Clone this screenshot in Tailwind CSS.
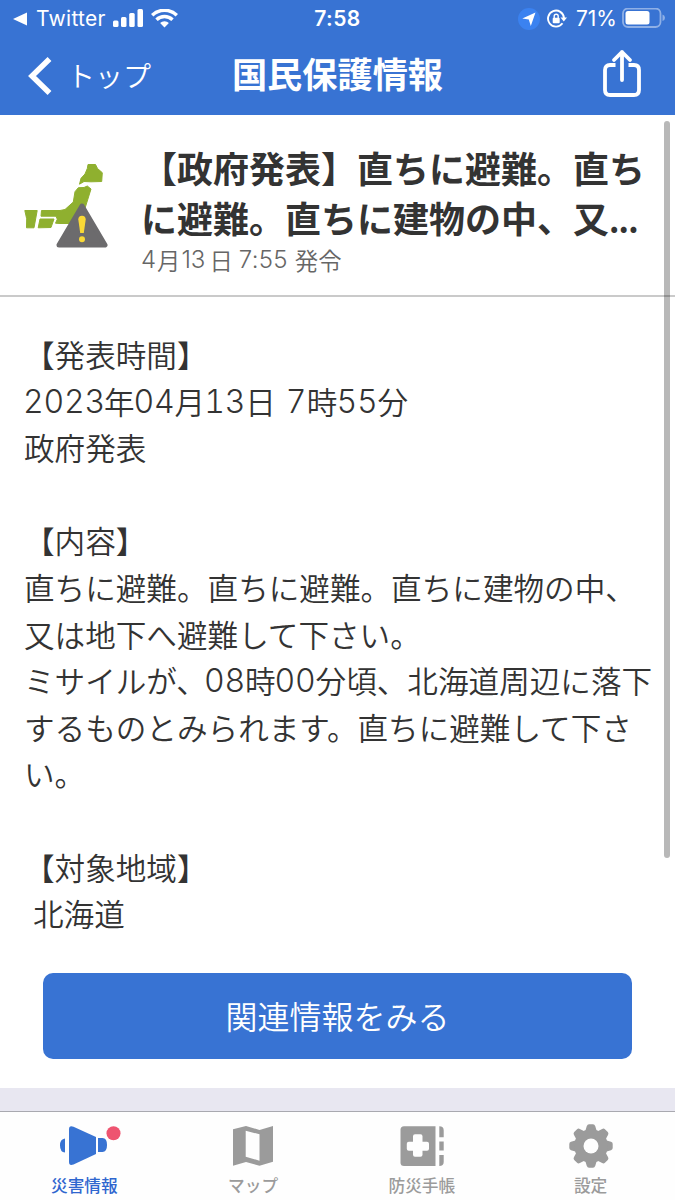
<!DOCTYPE html>
<html lang="ja">
<head>
<meta charset="utf-8">
<title>国民保護情報</title>
<script src="https://cdn.jsdelivr.net/npm/@tailwindcss/browser@4"></script>
</head>
<body class="relative flex h-[1200px] w-[675px] flex-col overflow-hidden bg-white font-['Noto_Sans_CJK_JP',sans-serif] text-[#333]">

<header class="h-[115px] shrink-0 bg-[#3873d3] text-white">
  <div class="grid h-9 grid-cols-3 items-center pt-px font-['Inter',sans-serif] text-[20.5px] leading-none">
    <div class="flex items-center pl-[13px]">
      <svg class="h-[14px] w-[14px]" viewBox="0 0 14 14"><path d="M0 7 14 .5v13z" fill="#fff"/></svg>
      <span class="ml-[9px] w-[69px] text-[21px] tracking-[0.3px]">Twitter</span>
      <svg class="ml-2 h-[20px] w-[30px]" viewBox="0 0 30 20" fill="#fff"><rect x="0" y="11.500" width="5.500" height="6.500" rx="1.500"/><rect x="8" y="8" width="5.500" height="10" rx="1.500"/><rect x="16.200" y="4" width="5.500" height="14" rx="1.500"/><rect x="24.500" y="0" width="5.500" height="18" rx="1.500"/></svg>
      <svg class="ml-2 h-[20px] w-[27px]" viewBox="0 0 27 20"><g fill="none" stroke="#fff" stroke-width="3.400"><path d="M1.200 6.300a17.500 17.500 0 0 1 24.600 0"/><path d="M5.500 10.800a11.400 11.400 0 0 1 16 0"/></g><path d="M13.500 18.500 9.100 14.100a6.300 6.300 0 0 1 8.800 0z" fill="#fff"/></svg>
    </div>
    <div class="text-center text-[21px] font-semibold tracking-[0.4px]">7:58</div>
    <div class="flex items-center justify-end pr-[9px]">
      <svg class="h-[22px] w-[22px]" viewBox="0 0 22 22"><circle cx="11" cy="11" r="11" fill="#3b82f0"/><path d="M17.500 4.500 12.800 18 10.800 11.500 4.300 10.600z" fill="#fff"/></svg>
      <svg class="ml-[7px] h-[20px] w-[20px]" viewBox="0 0 20 20"><path d="M15.500 14.300A8 8 0 1 1 17 9" fill="none" stroke="#fff" stroke-width="1.900"/><path d="M13.500 8.500h6.500l-3.200 4z" fill="#fff"/><rect x="5.700" y="8.700" width="7" height="5.600" rx="1" fill="#fff"/><path d="M7.200 9V7.300a2 2 0 0 1 4 0V9" fill="none" stroke="#fff" stroke-width="1.400"/></svg>
      <span class="ml-[9px] w-[40px] text-[21px] tracking-[-0.1px]">71%</span>
      <svg class="ml-[6px] h-[21px] w-[44px]" viewBox="0 0 44 21"><rect x="1" y="0.500" width="37.500" height="18.500" rx="5" fill="none" stroke="#8fb0e6" stroke-width="1.800"/><rect x="3.500" y="3" width="24" height="13.500" rx="2.500" fill="#fff"/><path d="M40.500 6.500v6.500q2.500-.7 2.500-3.250T40.500 6.500z" fill="#8fb0e6"/></svg>
    </div>
  </div>
  <div class="grid h-[79px] grid-cols-[200px_1fr_200px] items-center">
    <div class="flex items-center pl-[28px]">
      <svg class="h-[40px] w-[24px]" viewBox="0 0 24 40"><path d="M21.500 3 4 20l17.500 17" fill="none" stroke="#fff" stroke-width="5.500"/></svg>
      <span class="-mt-[2px] ml-[15px] whitespace-nowrap text-[28px] font-[350] leading-none">トップ</span>
    </div>
    <h1 class="-mt-[6px] whitespace-nowrap text-center text-[35.2px] font-bold leading-none">国民保護情報</h1>
    <div class="flex justify-end pr-[34px]">
      <svg class="-mt-[5px] h-[48px] w-[38px]" viewBox="0 0 38 48" fill="none" stroke="#fff" stroke-width="3.800"><path d="M12.500 16H7q-5 0-5 5v20q0 5 5 5h24q5 0 5-5V21q0-5-5-5h-5.500"/><path d="M19 31V3M11 11l8-8 8 8" stroke-linejoin="round" stroke-linecap="round"/></svg>
    </div>
  </div>
</header>

<section class="flex h-[182px] shrink-0 border-b-2 border-[#cacaca]">
  <svg class="ml-6 mt-[48px] h-[86px] w-[84px] shrink-0" viewBox="0 0 84 86">
    <g fill="#8fb02f" stroke="#8fb02f" stroke-linejoin="round">
      <path d="M64 1.500h7.500l2 4 4.800 4.200-.6 8.800-10.700.3-7-.3-4.500 2.700L57 15.300 61 11l2.300-5.500z"/>
      <path d="M17.500 47.500H36l5-1 8.300-7.500L51 28.700l3.300-4 5.700-.2 3.300-1.500 3.700 3-6 19.300L57.700 60.500H36l-4.500-.3 1.800-4-1.300-3H17z"/>
      <path d="M.8 47.500h12.400L10 64.800H2.500l.2-9z"/><path d="M16 56h14l-3 8.500-12.800.3z"/>
    </g>
    <path d="M58 43 81 82H35z" fill="#6c6b6d" stroke="#6c6b6d" stroke-width="5" stroke-linejoin="round"/>
    <path d="M54.300 56.500q0-3.800 3.700-3.800t3.700 3.800L59.800 70h-3.600z" fill="#f9d936"/><circle cx="58" cy="76.300" r="3" fill="#f9d936"/>
  </svg>
  <div class="ml-[33px] whitespace-nowrap pt-[27px]">
    <h2 class="text-[36px] font-bold leading-[50px]">【政府発表】直ちに避難。直ち<br>に避難。直ちに建物の中、又<span class="text-[32px] tracking-[-0.8px]">...</span></h2>
    <p class="mt-px flex h-[30px] text-[23.4px] font-[350] leading-[30px] text-[#666]"><span class="w-[16px] font-['Inter'] text-[24px] font-light">4</span><span>月</span><span class="w-[29px] pl-px font-['Inter'] text-[24px] font-light">13</span><span>日</span><span class="ml-[6px] w-[56px] font-['Inter'] text-[24px] font-light tracking-[0.3px]">7:55</span><span>発令</span></p>
  </div>
</section>

<main class="flex h-[791px] shrink-0 flex-col px-6 pt-[34px]">
  <div class="grid auto-rows-[46.6px] whitespace-pre text-[30.6px] font-[350] leading-[46.6px]">
    <p>【発表時間】</p>
    <p class="flex"><span class="-ml-px mr-px w-[80px] pt-px font-['Inter'] text-[32px] font-light tabular-nums tracking-[-0.2px]">2023</span>年<span class="-ml-px mr-px w-[40px] pt-px font-['Inter'] text-[32px] font-light tabular-nums tracking-[-0.2px]">04</span>月<span class="-ml-px mr-px w-[40px] pt-px font-['Inter'] text-[32px] font-light tabular-nums tracking-[-0.2px]">13</span>日<span class="ml-[10px] w-[21px] pt-px font-['Inter'] text-[32px] font-light tabular-nums">7</span>時<span class="-ml-px mr-px w-[40px] pt-px font-['Inter'] text-[32px] font-light tabular-nums tracking-[-0.2px]">55</span>分</p>
    <p>政府発表</p>
    <p></p>
    <p>【内容】</p>
    <p>直ちに避難。直ちに避難。直ちに建物の中、</p>
    <p>又は地下へ避難して下さい。</p>
    <p class="flex"><span class="w-[181px]">ミサイルが、</span><span class="-ml-px mr-px w-[40px] pt-px font-['Inter'] text-[32px] font-light tabular-nums tracking-[-0.2px]">08</span>時<span class="-ml-px mr-px w-[40px] pt-px font-['Inter'] text-[32px] font-light tabular-nums tracking-[-0.2px]">00</span>分頃、北海道周辺に落下</p>
    <p>するものとみられます。直ちに避難して下さ</p>
    <p>い。</p>
    <p></p>
    <p>【対象地域】</p>
    <p class="pl-[9px]">北海道</p>
  </div>
  <button class="mx-[19px] mt-[36px] h-[86px] shrink-0 rounded-[10px] bg-[#3873d3] pb-[2px] text-[32px] font-[350] text-white">関連情報をみる</button>
</main>

<div class="h-[23px] shrink-0 bg-[#e8e7f1]"></div>

<nav class="grid h-[89px] shrink-0 grid-cols-4 border-t border-[#a9a9b0] bg-[#fefefe] text-center text-[16.700px] font-medium text-[#9b9b9b]">
  <div class="flex flex-col items-center pt-[12px] text-[#2f66cf]">
    <svg class="h-[44px] w-[64px] overflow-visible" viewBox="0 0 64 44"><g fill="#3873d3"><path d="M17 5.500Q17 1 21.500 2.800L44 13v17L21.500 40.500Q17 42.200 17 38z"/><path d="M46 14h4.500q4.500 0 4.500 7t-4.500 7H46z"/><path d="M13 14.500v14Q8 28 8 21.500t5-7z"/></g><circle cx="61.500" cy="9.300" r="7" fill="#ee5470"/></svg>
    <span class="mt-[4px] leading-[26px]">災害情報</span>
  </div>
  <div class="flex flex-col items-center pt-[12px]">
    <svg class="h-[44px] w-[40px]" viewBox="0 0 40 44"><path fill="#9b9b9b" fill-rule="evenodd" d="M0 5.300 13 2l13.500 4L40 2v35.700l-13.500 4L13 38 0 41.700zM12.700 6.700v26l13.800 4V10.300z"/></svg>
    <span class="mt-[4px] leading-[26px]">マップ</span>
  </div>
  <div class="flex flex-col items-center pt-[12px]">
    <svg class="h-[44px] w-[44px]" viewBox="0 0 44 44" fill="#9b9b9b"><path d="M4 2.200h31.500V42H4q-3.500 0-3.500-3.500V5.700Q.5 2.200 4 2.200z"/><path d="M15 10.300h5.500q2 0 2 2v5.400H27q2 0 2 2v5q0 2-2 2h-4.500v4q0 2-2 2H15q-2 0-2-2v-4H8.800q-2 0-2-2v-5q0-2 2-2H13v-5.400q0-2 2-2z" fill="#fefefe"/><path d="M39.300 2.200q4.400 0 4.400 4v7h-4.400zM39.300 17.500h4.400v9h-4.400zM39.300 31h4.400v7q0 4-4.400 4z"/></svg>
    <span class="mt-[4px] leading-[26px]">防災手帳</span>
  </div>
  <div class="flex flex-col items-center pt-[12px]">
    <svg class="h-[44px] w-[44px]" viewBox="0 0 44 44"><g fill="#9b9b9b"><g id="tooth"><path d="M16 8 17.800 2Q18.400.3 20 .3h4q1.600 0 2.200 1.700L28 8v28l-1.800 6q-.6 1.700-2.200 1.700h-4q-1.600 0-2.200-1.700L16 36z"/></g><use href="#tooth" transform="rotate(45 22 22)"/><use href="#tooth" transform="rotate(90 22 22)"/><use href="#tooth" transform="rotate(135 22 22)"/><circle cx="22" cy="22" r="16.800"/></g><circle cx="22" cy="22" r="7.500" fill="#fefefe"/></svg>
    <span class="mt-[4px] leading-[26px]">設定</span>
  </div>
</nav>

<!-- Scroll indicator overlay -->
<div class="absolute left-[664px] top-[121px] h-[737px] w-[6px] rounded-full bg-black/28"></div>
</body>
</html>
